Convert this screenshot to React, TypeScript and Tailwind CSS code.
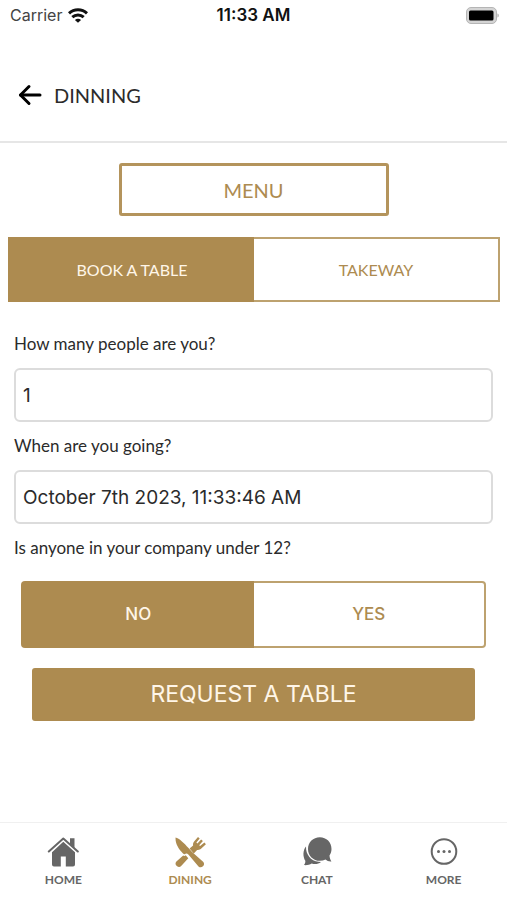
import { useState } from "react";

const tabs = ["BOOK A TABLE", "TAKEWAY"];
const answers = ["NO", "YES"];

function WifiIcon() {
  return (
    <svg width="20" height="15" viewBox="0 0 20 15" fill="none" stroke="#111" strokeWidth="3">
      <path d="M1 5.400C6 .6 14 .6 19 5.400" />
      <path d="M4.300 9.200c3.300-3 8.100-3 11.400 0" />
      <path d="M10 14.800 6.900 11.900c1.700-1.500 4.500-1.500 6.200 0z" fill="#111" stroke="none" />
    </svg>
  );
}

function BatteryIcon() {
  return (
    <svg width="33" height="17" viewBox="0 0 33 17">
      <rect x=".5" y=".5" width="30" height="16" rx="4.5" fill="#d4d4d4" stroke="#b5b5b5" />
      <rect x="3" y="3.5" width="24.5" height="10" rx="1.5" fill="#000" />
      <path d="M31.5 6.5v4c1.6-.6 1.6-3.4 0-4z" fill="#a3a3a3" />
    </svg>
  );
}

function BackIcon() {
  return (
    <svg width="24" height="22" viewBox="0 0 24 22" fill="none" stroke="#000" strokeWidth="3">
      <path d="M2.500 11H22" strokeLinecap="round" />
      <path d="M11 2.500 2.500 11l8.500 8.500" strokeLinecap="round" strokeLinejoin="round" />
    </svg>
  );
}

function HomeIcon() {
  return (
    <svg width="32" height="32" viewBox="0 0 32 32">
      <path d="M1.800 15.500 16.300 2.600l14.500 12.900" fill="none" stroke="currentColor" strokeWidth="2" strokeLinecap="round" strokeLinejoin="round" />
      <path d="M23 2.300h4.500v10L23 8.200z" fill="currentColor" />
      <path
        d="M16.300 5.700 28 16.200V28.600a2 2 0 0 1-2 2h-7.200V20.500h-5v10.100H7a2 2 0 0 1-2-2V16.200z"
        fill="currentColor"
      />
    </svg>
  );
}

function DiningIcon() {
  return (
    <svg width="32" height="32" viewBox="0 0 32 32" fill="currentColor">
      {/* knife */}
      <path d="M1.600 1.400c3.600.9 8.400 5.300 12.900 10.600l3.600 4 11 9.700a3.300 3.300 0 0 1-4.600 4.700l-9.900-11.600c-1.100-1-2.300-1.700-3.200-.9-.8.700-1.600.500-2.400-.4C4.600 12.800 1 7.500 1.600 1.400z" />
      {/* fork handle */}
      <path d="M9.200 19.600c1 .6 1.700.3 2.500-.3l2.600 2.900-6.900 7.600a3.300 3.300 0 0 1-5-4.300z" />
      {/* fork head */}
      <path d="m15.600 12.600 3.500-3.200c-.3-1.800.2-3 1.200-4.200l3.700-4.300 1.700 1.500-3.300 4.200 1 .9 3.700-4.100 1.800 1.700-3.700 4.100.9.9 4.300-3.500 1.500 1.700-4.300 4c-1.400 1.300-2.800 1.900-4.500 1.600l-3.300 3.600z" />
    </svg>
  );
}

function ChatIcon() {
  return (
    <svg width="32" height="32" viewBox="0 0 32 32" fill="currentColor">
      <path d="M5 10.500c-.3 8 4.700 14.400 12.500 15.300l2.500.2c-2.600 2.100-6.100 2.600-9.300 1.500-2 1.100-4.600 1.900-7.700 1.600 1-1.300 1.500-2.700 1.300-4.300-2.500-4.200-2.600-10.200.7-14.300z" />
      <path d="M18.800 1.300c6.700 0 11.700 5 11.700 11.600 0 2.500-.7 4.700-2 6.500.1 2.200.7 4.100 1.900 6-2.400.2-4.300-.4-5.900-1.800-1.700.8-3.600 1.200-5.700 1.200C12.200 24.800 7 19.500 7 12.900S12.200 1.300 18.800 1.300z" />
    </svg>
  );
}

function MoreIcon() {
  return (
    <svg width="32" height="32" viewBox="0 0 32 32" fill="currentColor">
      <circle cx="16" cy="15.500" r="12.300" fill="none" stroke="currentColor" strokeWidth="2" />
      <circle cx="10.500" cy="15.500" r="1.500" />
      <circle cx="16" cy="15.500" r="1.500" />
      <circle cx="21.500" cy="15.500" r="1.500" />
    </svg>
  );
}

const navItems = [
  { label: "HOME", icon: HomeIcon },
  { label: "DINING", icon: DiningIcon },
  { label: "CHAT", icon: ChatIcon },
  { label: "MORE", icon: MoreIcon },
];

export default function App() {
  const [tab, setTab] = useState("BOOK A TABLE");
  const [answer, setAnswer] = useState("NO");
  const [page, setPage] = useState("DINING");
  const [people, setPeople] = useState("1");
  const [date, setDate] = useState("October 7th 2023, 11:33:46 AM");

  return (
    <div className="flex min-h-screen flex-col bg-white font-['Lato',sans-serif] text-[#2b2b2b]">
      {/* Status bar */}
      <div className="grid h-[30px] grid-cols-3 items-center px-2 font-['Inter',sans-serif] text-base">
        <div className="flex items-center gap-1.5 pl-0.5 text-[#444]">
          <span>Carrier</span>
          <WifiIcon />
        </div>
        <span className="text-center text-[17px] leading-6 font-semibold text-[#111]">11:33 AM</span>
        <div className="flex justify-end">
          <BatteryIcon />
        </div>
      </div>

      <header className="flex h-[113px] items-center gap-3 border-b-2 border-[#e6e6e6] px-[18px] pt-[18px]">
        <button aria-label="Back">
          <BackIcon />
        </button>
        <h1 className="text-xl leading-6">DINNING</h1>
      </header>

      <main className="flex flex-1 flex-col pt-5">
        <button className="h-[53px] w-[270px] self-center rounded-[3px] border-3 border-[#b4945c] text-xl text-[#ad8b50]">
          MENU
        </button>

        <div className="mx-[7px] ml-2 mt-[21px] grid h-[65px] grid-cols-2">
          {tabs.map((t) => (
            <button
              key={t}
              onClick={() => setTab(t)}
              className={`border-2 text-base first:border-r-0 last:border-l-0 ${
                tab === t ? "border-[#ad8b50] bg-[#ad8b50] text-[#fff6e8]" : "border-[#bda26f] text-[#ad8b50]"
              }`}
            >
              {t}
            </button>
          ))}
        </div>

        <form className="flex flex-col px-[14px] pt-[18px]" onSubmit={(e) => e.preventDefault()}>
          <label htmlFor="people" className="py-3 text-[17px] leading-6">
            How many people are you?
          </label>
          <input
            id="people"
            value={people}
            onChange={(e) => setPeople(e.target.value)}
            className="h-[54px] rounded-md border-2 border-[#dcdcdc] px-[7px] font-['Inter',sans-serif] text-[19px]"
          />
          <label htmlFor="date" className="py-3 text-[17px] leading-6">
            When are you going?
          </label>
          <input
            id="date"
            value={date}
            onChange={(e) => setDate(e.target.value)}
            className="h-[54px] rounded-md border-2 border-[#dcdcdc] px-[7px] font-['Inter',sans-serif] text-[19px]"
          />
          <p id="under12" className="py-3 text-[17px] leading-6">
            Is anyone in your company under 12?
          </p>
          <div
            role="group"
            aria-labelledby="under12"
            className="mx-[7px] mt-[9px] grid h-[67px] grid-cols-2"
          >
            {answers.map((a) => (
              <button
                key={a}
                type="button"
                onClick={() => setAnswer(a)}
                className={`border-2 font-['Inter',sans-serif] text-[17px] font-medium first:rounded-l first:border-r-0 last:rounded-r last:border-l-0 ${
                  answer === a ? "border-[#ad8b50] bg-[#ad8b50] text-[#fff6e8]" : "border-[#bda26f] text-[#ad8b50]"
                }`}
              >
                {a}
              </button>
            ))}
          </div>
          <button
            type="submit"
            className="mx-[18px] mt-5 h-[53px] rounded-[3px] bg-[#ad8b50] font-['Inter',sans-serif] text-[23px] text-[#fff6e8]"
          >
            REQUEST A TABLE
          </button>
        </form>
      </main>

      <nav className="grid h-[78px] grid-cols-4 border-t border-[#f0f0f0]">
        {navItems.map(({ label, icon: Icon }) => (
          <button
            key={label}
            onClick={() => setPage(label)}
            className={`flex flex-col items-center gap-1 pt-[13px] text-xs font-bold ${
              page === label ? "text-[#ad8b50]" : "text-[#666]"
            }`}
          >
            <Icon />
            {label}
          </button>
        ))}
      </nav>
    </div>
  );
}
